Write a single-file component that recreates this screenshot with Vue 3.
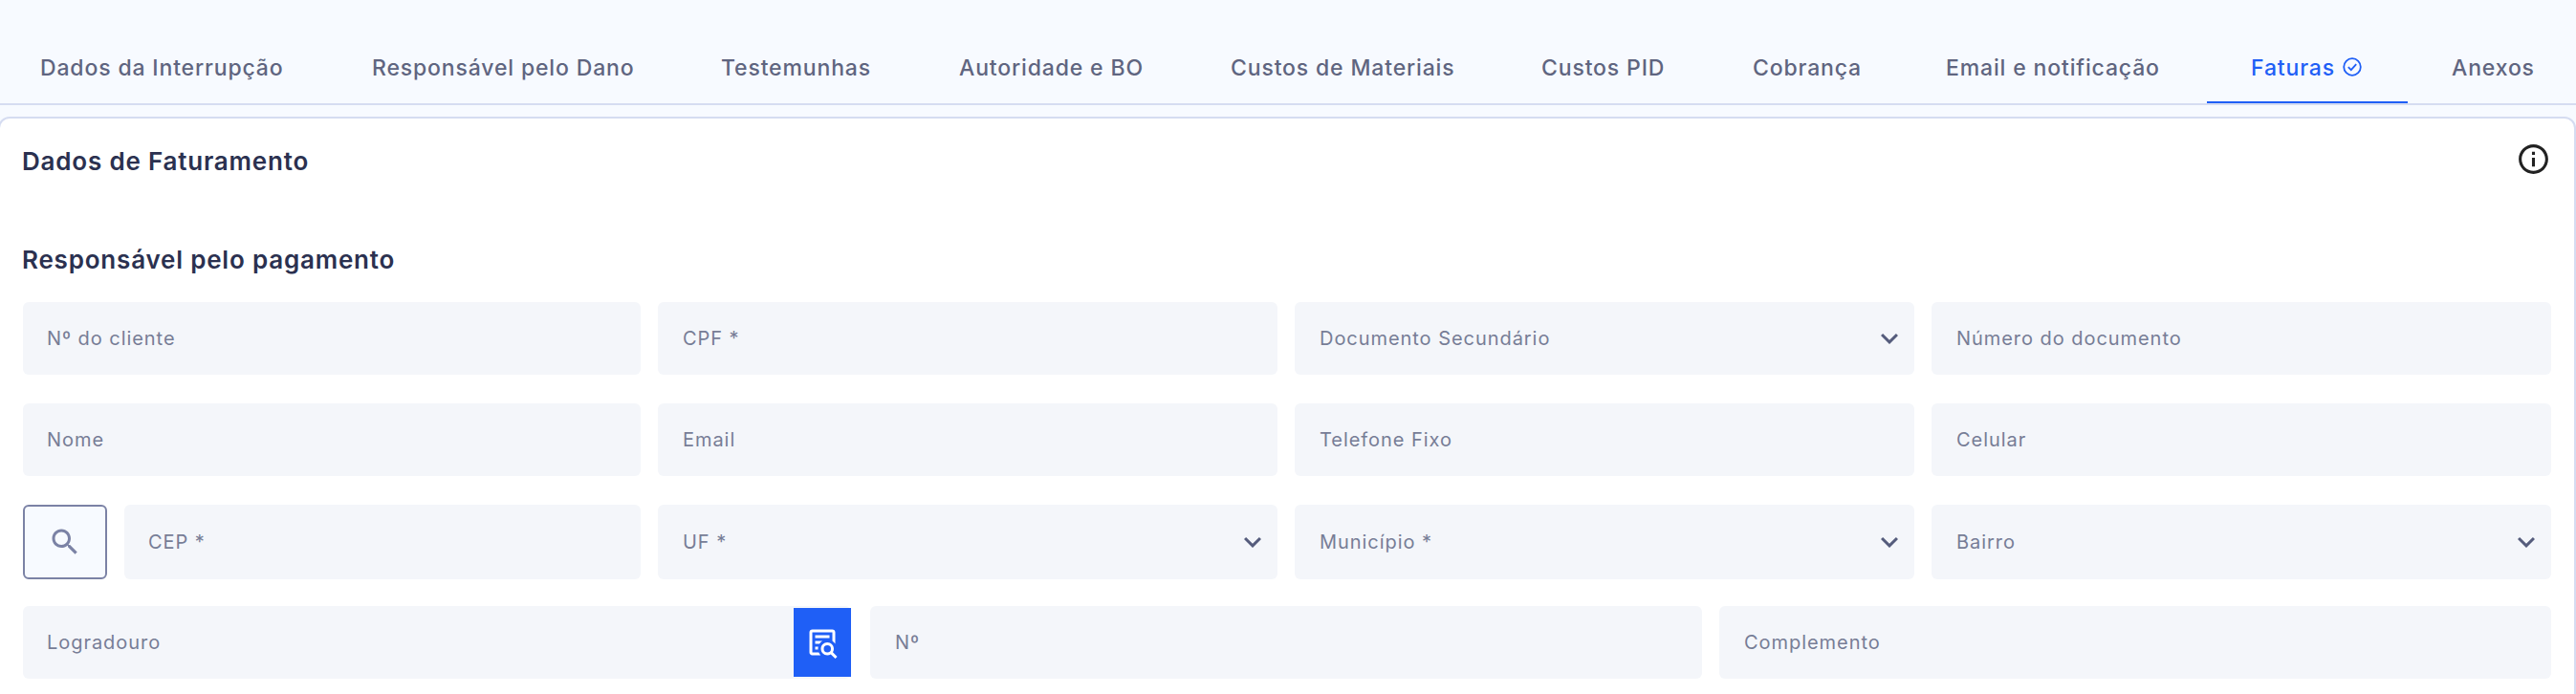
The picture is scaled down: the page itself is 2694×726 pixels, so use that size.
<script setup>
import { ref } from "vue";

const activeTab = ref("faturas");

const tabs = [
  { id: "interrupcao", label: "Dados da Interrupção" },
  { id: "responsavel", label: "Responsável pelo Dano" },
  { id: "testemunhas", label: "Testemunhas" },
  { id: "autoridade", label: "Autoridade e BO" },
  { id: "materiais", label: "Custos de Materiais" },
  { id: "pid", label: "Custos PID" },
  { id: "cobranca", label: "Cobrança" },
  { id: "email", label: "Email e notificação" },
  { id: "faturas", label: "Faturas", checked: true },
  { id: "anexos", label: "Anexos" },
];

// Form rows, each one with its own column layout
const rows = [
  {
    layout: "quarters",
    fields: [
      { label: "Nº do cliente" },
      { label: "CPF *" },
      { label: "Documento Secundário", select: true },
      { label: "Número do documento" },
    ],
  },
  {
    layout: "quarters",
    fields: [
      { label: "Nome" },
      { label: "Email" },
      { label: "Telefone Fixo" },
      { label: "Celular" },
    ],
  },
  {
    layout: "with-button",
    search: true,
    fields: [
      { label: "CEP *" },
      { label: "UF *", select: true },
      { label: "Município *", select: true },
      { label: "Bairro", select: true },
    ],
  },
  {
    layout: "thirds",
    fields: [
      { label: "Logradouro", lookup: true },
      { label: "Nº" },
      { label: "Complemento" },
    ],
  },
];
</script>

<template>
  <div class="page">
    <nav class="tabs">
      <button
        v-for="tab in tabs"
        :key="tab.id"
        type="button"
        class="tab"
        :class="{ active: tab.id === activeTab }"
        @click="activeTab = tab.id"
      >
        <span>{{ tab.label }}</span>
        <svg v-if="tab.checked" class="check-icon" viewBox="0 0 20 20">
          <circle cx="10" cy="10" r="8.8" />
          <path d="M5.8 10.2l3 3 5.4-6" />
        </svg>
      </button>
    </nav>

    <section class="card">
      <header class="card-header">
        <h2 class="title">Dados de Faturamento</h2>
        <svg class="info-icon" viewBox="0 0 24 24">
          <path
            d="M11 7h2v2h-2zm0 4h2v6h-2zm1-9C6.48 2 2 6.48 2 12s4.48 10 10 10 10-4.48 10-10S17.52 2 12 2zm0 18c-4.41 0-8-3.59-8-8s3.59-8 8-8 8 3.59 8 8-3.59 8-8 8z"
          />
        </svg>
      </header>

      <h3 class="title subtitle">Responsável pelo pagamento</h3>

      <form class="form" @submit.prevent>
        <div v-for="(row, index) in rows" :key="index" class="row" :class="row.layout">
          <button v-if="row.search" type="button" class="search-button" aria-label="Buscar CEP">
            <svg class="icon" viewBox="0 0 24 24">
              <path
                d="M15.5 14h-.79l-.28-.27C15.41 12.59 16 11.11 16 9.5 16 5.91 13.09 3 9.5 3S3 5.91 3 9.5 5.91 16 9.5 16c1.61 0 3.09-.59 4.23-1.57l.27.28v.79l5 4.99L20.49 19l-4.99-5zm-6 0C7.01 14 5 11.99 5 9.5S7.01 5 9.5 5 14 7.01 14 9.5 11.99 14 9.5 14z"
              />
            </svg>
          </button>

          <div v-for="field in row.fields" :key="field.label" class="field">
            <label class="label">{{ field.label }}</label>
            <svg v-if="field.select" class="icon chevron" viewBox="0 0 24 24">
              <path d="M7.41 8.59L12 13.17l4.59-4.58L18 10l-6 6-6-6z" />
            </svg>
            <button v-if="field.lookup" type="button" class="lookup-button" aria-label="Buscar logradouro">
              <svg class="icon" viewBox="0 0 24 24">
                <path
                  d="M15.5,12C18,12 20,14 20,16.5C20,17.38 19.75,18.21 19.31,18.9L22.39,22L21,23.39L17.88,20.32C17.19,20.75 16.37,21 15.5,21C13,21 11,19 11,16.5C11,14 13,12 15.5,12M15.5,14A2.5,2.5 0 0,0 13,16.5A2.5,2.5 0 0,0 15.5,19A2.5,2.5 0 0,0 18,16.5A2.5,2.5 0 0,0 15.5,14M5,3H19C20.11,3 21,3.89 21,5V13.03C20.5,12.23 19.81,11.54 19,11V5H5V19H9.5C9.81,19.75 10.26,20.42 10.81,21H5C3.89,21 3,20.11 3,19V5C3,3.89 3.89,3 5,3M7,7H17V9H7V7M7,11H12.03C11.23,11.5 10.54,12.19 10,13H7V11M7,15H9.17C9.06,15.5 9,16 9,16.5V17H7V15Z"
                />
              </svg>
            </button>
          </div>
        </div>
      </form>
    </section>
  </div>
</template>

<style>
body {
  margin: 0;
  background: #f7faff;
}
</style>

<style scoped>
.page {
  box-sizing: border-box;
  width: 2694px;
  height: 726px;
  overflow: hidden;
  background: #f7faff;
  font-family: Inter, "Open Sans", sans-serif;
}

button {
  margin: 0;
  padding: 0;
  border: 0;
  background: none;
  font-family: inherit;
  cursor: pointer;
}

.tabs {
  display: grid;
  grid-template-columns: 347px 365px 249px 284px 325px 221px 202px 319px 210px 176px;
  box-sizing: border-box;
  height: 110px;
  margin-left: -4px;
  padding-top: 36px;
  border-bottom: 2px solid #d5dcf1;
}

.tab {
  display: flex;
  align-items: center;
  gap: 8px;
  box-sizing: border-box;
  padding: 1px 0 0 46px;
  border-bottom: 2px solid transparent;
  color: #5f6580;
  font-size: 23px;
  font-weight: 500;
  letter-spacing: 0.85px;
  line-height: 69px;
  white-space: nowrap;
}

.tab.active {
  border-bottom-color: #1f5ff6;
  color: #1f5ff6;
}

.check-icon {
  width: 20px;
  height: 20px;
  margin-bottom: 3px;
  fill: none;
  stroke: currentColor;
  stroke-width: 1.8;
}

.card {
  box-sizing: border-box;
  height: 620px;
  margin: 12px 0 0 -2px;
  padding: 0 24px;
  border: 2px solid #d5dcf1;
  border-radius: 12px;
  background: #fff;
}

.card-header {
  display: flex;
  align-items: center;
  justify-content: space-between;
  height: 84px;
}

.title {
  margin: 0 0 0 -1px;
  color: #2b3150;
  font-size: 26px;
  font-weight: 600;
  letter-spacing: 0.8px;
  line-height: 40px;
}

.card-header .title {
  padding-top: 5px;
}

.info-icon {
  width: 37px;
  height: 37px;
  fill: #222;
}

.subtitle {
  margin: 44px 0 24px -1px;
}

.form {
  display: flex;
  flex-direction: column;
  gap: 30px;
}

.row {
  display: grid;
  gap: 18px;
  height: 76px;
}

.quarters {
  grid-template-columns: 646px repeat(3, 648px);
}

.with-button {
  grid-template-columns: 88px 540px repeat(3, 648px);
}

.thirds {
  grid-template-columns: 868px 870px 870px;
}

.thirds .field:first-child {
  margin-right: 2px;
}

.field {
  display: flex;
  align-items: center;
  justify-content: space-between;
  box-sizing: border-box;
  padding: 0 8px 0 26px;
  border-radius: 6px;
  background: #f4f6fa;
}

.field:first-child,
.search-button + .field {
  padding-left: 25px;
}

.thirds .field:first-child {
  padding-right: 0;
}

.label {
  padding-bottom: 1px;
  color: #777d96;
  font-size: 20px;
  letter-spacing: 0.95px;
  white-space: nowrap;
}

.icon {
  width: 36px;
  height: 36px;
  fill: currentColor;
}

.chevron {
  color: #555c7c;
}

.search-button {
  display: flex;
  align-items: center;
  justify-content: center;
  box-sizing: border-box;
  height: 78px;
  border: 2px solid #7b82a5;
  border-radius: 6px;
  background: #f7faff;
  color: #7b82a5;
}

.lookup-button {
  display: flex;
  align-items: center;
  justify-content: center;
  width: 60px;
  height: 72px;
  background: #1f5ff6;
  color: #fff;
}
</style>
